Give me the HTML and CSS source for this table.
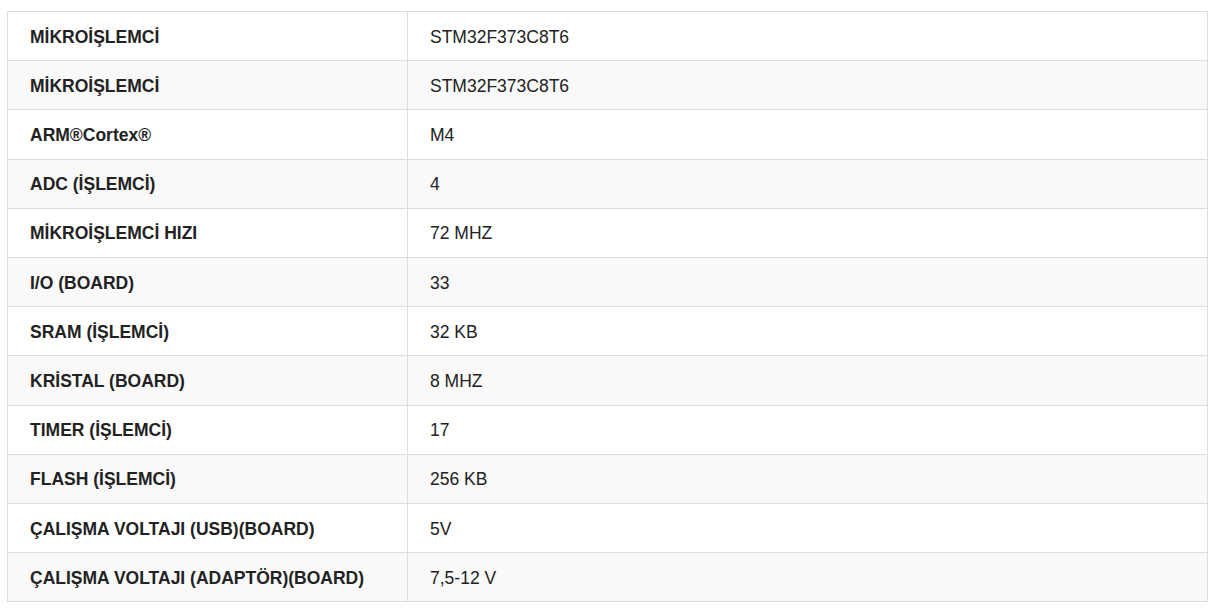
FILE: index.html
```html
<!DOCTYPE html>
<html lang="tr">
<head>
<meta charset="utf-8">
<link rel="stylesheet" href="styles.css">
</head>
<body>
<div class="wrap">
<table class="specs">
<tbody>
<tr><th>MİKROİŞLEMCİ</th><td>STM32F373C8T6</td></tr>
<tr><th>MİKROİŞLEMCİ</th><td>STM32F373C8T6</td></tr>
<tr><th>ARM®Cortex®</th><td>M4</td></tr>
<tr><th>ADC (İŞLEMCİ)</th><td>4</td></tr>
<tr><th>MİKROİŞLEMCİ HIZI</th><td>72 MHZ</td></tr>
<tr><th>I/O (BOARD)</th><td>33</td></tr>
<tr><th>SRAM (İŞLEMCİ)</th><td>32 KB</td></tr>
<tr><th>KRİSTAL (BOARD)</th><td>8 MHZ</td></tr>
<tr><th>TIMER (İŞLEMCİ)</th><td>17</td></tr>
<tr><th>FLASH (İŞLEMCİ)</th><td>256 KB</td></tr>
<tr><th>ÇALIŞMA VOLTAJI (USB)(BOARD)</th><td>5V</td></tr>
<tr><th>ÇALIŞMA VOLTAJI (ADAPTÖR)(BOARD)</th><td>7,5-12 V</td></tr>
</tbody>
</table>
</div>
</body>
</html>
```

FILE: styles.css
```css
html, body {
  margin: 0;
  padding: 0;
  background: #fff;
}
.wrap {
  padding: 11px 8px 0 7px;
}
.specs {
  width: 1201px;
  border-collapse: collapse;
  font-family: "Liberation Sans", Arial, sans-serif;
  font-size: 17.5px;
  color: #222;
  border: 1px solid #ddd;
}
.specs th, .specs td {
  border: 1px solid #ddd;
  padding: 12.5px 22px 11.5px;
  line-height: 24.2px;
  text-align: left;
  vertical-align: middle;
}
.specs th {
  width: 355px;
  font-weight: bold;
}
.specs td {
  font-weight: normal;
}
.specs tr:nth-child(even) {
  background: #f9f9f9;
}
```
